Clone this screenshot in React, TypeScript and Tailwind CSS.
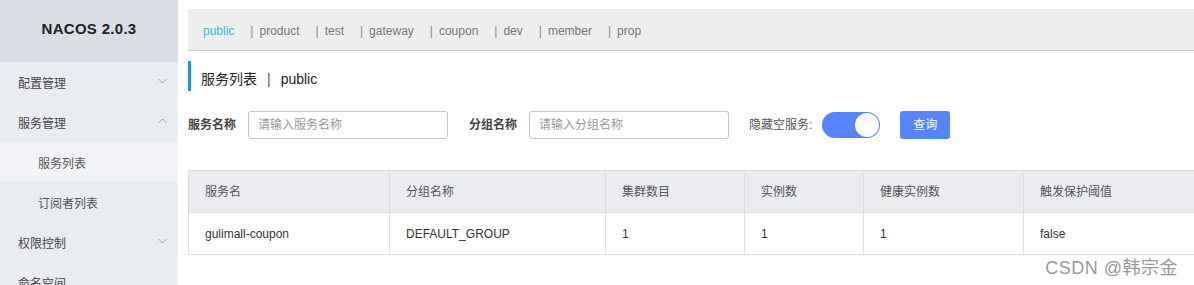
const font = { fontFamily: '"Liberation Sans", "Noto Sans CJK SC", sans-serif' };

type MenuItem = { label: string; sub?: boolean; open?: boolean; closed?: boolean; active?: boolean };

const menu: MenuItem[] = [
  { label: '配置管理', closed: true },
  { label: '服务管理', open: true },
  { label: '服务列表', sub: true, active: true },
  { label: '订阅者列表', sub: true },
  { label: '权限控制', closed: true },
  { label: '命名空间' },
];

const tabs = ['product', 'test', 'gateway', 'coupon', 'dev', 'member', 'prop'];

const columns = [
  { title: '服务名', width: 'w-[201px]' },
  { title: '分组名称', width: 'w-[216px]' },
  { title: '集群数目', width: 'w-[139px]' },
  { title: '实例数', width: 'w-[119px]' },
  { title: '健康实例数', width: 'w-[160px]' },
  { title: '触发保护阈值', width: 'flex-1' },
];

const row = ['gulimall-coupon', 'DEFAULT_GROUP', '1', '1', '1', 'false'];

const Chevron = ({ up }: { up?: boolean }) => (
  <svg width="9" height="6" viewBox="0 0 9 6" className="-mt-[6px]">
    <polyline
      points={up ? '0.5,5 4.5,1 8.5,5' : '0.5,1 4.5,5 8.5,1'}
      fill="none"
      stroke="#9aa0a8"
      strokeWidth="1"
    />
  </svg>
);

function Sidebar() {
  return (
    <aside className="w-[178px] shrink-0 h-[285px] overflow-hidden bg-[#e9ecf0]">
      <div className="h-[62px] bg-[#d9dee5] pt-[18px] text-center text-[15px] font-bold text-[#222] tracking-[0.3px]">
        NACOS 2.0.3
      </div>
      {menu.map((item) => (
        <div
          key={item.label}
          className={`h-[40px] flex items-center justify-between pt-[3px] pr-[11px] text-[12px] ${
            item.sub ? 'pl-[38px] text-[#555]' : 'pl-[18px] text-[#444]'
          } ${item.active ? 'bg-[#f1f3f6]' : ''}`}
        >
          <span>{item.label}</span>
          {item.closed && <Chevron />}
          {item.open && <Chevron up />}
        </div>
      ))}
    </aside>
  );
}

function Main() {
  return (
    <main className="flex-1 pl-[10px] bg-white">
      <div className="mt-[9px] h-[42px] bg-[#eeeeee] border-b border-[#cdcdcd] flex items-center pt-[3px] pl-[15px] text-[12px]">
        <span className="text-[#3cb8de] mr-[16px]">public</span>
        {tabs.map((t) => (
          <span key={t} className="text-[#777] mr-[16px]">
            <span className="mr-[6px] text-[#8a8a8a]">|</span>
            {t}
          </span>
        ))}
      </div>

      <div className="mt-[10px] h-[30px] border-l-[3px] border-[#0e9dd8] flex items-center pt-[7px] pl-[10px] text-[14px] text-[#222]">
        服务列表
        <span className="mx-[10px] text-[#555]">|</span>
        public
      </div>

      <div className="mt-[20px] flex items-center h-[28px] text-[12px]">
        <span className="font-bold text-[#444] mr-[12px]">服务名称</span>
        <div className="w-[200px] h-[28px] border border-[#c4c6cf] rounded-[3px] flex items-center pl-[9px] text-[#999]">
          请输入服务名称
        </div>
        <span className="font-bold text-[#444] ml-[21px] mr-[12px]">分组名称</span>
        <div className="w-[200px] h-[28px] border border-[#c4c6cf] rounded-[3px] flex items-center pl-[9px] text-[#999]">
          请输入分组名称
        </div>
        <span className="text-[#555] ml-[20px] mr-[10px]">隐藏空服务:</span>
        <div className="w-[58px] h-[26px] rounded-full bg-[#5584ff] flex items-center justify-end pr-[1px]">
          <div className="w-[24px] h-[24px] rounded-full bg-white" />
        </div>
        <div className="ml-[20px] w-[50px] h-[28px] rounded-[3px] bg-[#5584ff] text-white flex items-center justify-center">
          查询
        </div>
      </div>

      <div className="mt-[31px] border-t border-b border-l border-[#dcdee3] text-[12px] text-[#333]">
        <div className="flex h-[42px] bg-[#ebecf0] border-b border-[#dcdee3]">
          {columns.map((c, i) => (
            <div
              key={c.title}
              className={`${c.width} shrink-0 flex items-center pl-[16px] text-[#555] ${
                i < columns.length - 1 ? 'border-r border-[#dcdee3]' : ''
              }`}
            >
              {c.title}
            </div>
          ))}
        </div>
        <div className="flex h-[41px]">
          {row.map((v, i) => (
            <div
              key={i}
              className={`${columns[i].width} shrink-0 flex items-center pl-[16px] ${
                i < row.length - 1 ? 'border-r border-[#dcdee3]' : ''
              }`}
            >
              {v}
            </div>
          ))}
        </div>
      </div>
    </main>
  );
}

export default function App() {
  return (
    <div className="relative flex w-[1194px] h-[285px] overflow-hidden bg-white" style={font}>
      <Sidebar />
      <Main />
      <div className="absolute right-[16px] top-[255px] text-[18px] text-[#9a9a9a] tracking-[0.5px]">
        CSDN @韩宗金
      </div>
    </div>
  );
}
